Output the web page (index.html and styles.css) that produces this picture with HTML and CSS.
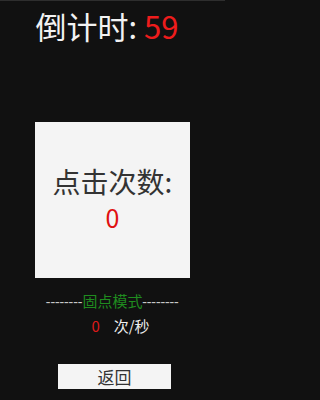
FILE: index.html
```html
<!DOCTYPE html>
<html lang="zh">
<head>
<meta charset="utf-8">
<link rel="stylesheet" href="styles.css">
</head>
<body>
<div class="screen">
  <div class="header"><span class="label">倒计时: </span><span class="count">59</span></div>
  <div class="box">
    <div class="box-label">点击次数:</div>
    <div class="box-count">0</div>
  </div>
  <div class="mode"><span class="dash">--------</span><span class="mode-name">固点模式</span><span class="dash">--------</span></div>
  <div class="rate"><span class="rate-num">0</span><span class="rate-unit">次/秒</span></div>
  <div class="btn-row"><div class="btn">返回</div></div>
</div>
</body>
</html>
```
FILE: styles.css
```css
html, body {
  margin: 0;
  padding: 0;
  background: #111111;
}
.screen {
  width: 225px;
  height: 400px;
  box-sizing: border-box;
  border-top: 1px solid #2e2e2e;
  background: #111111;
  font-family: "Noto Sans CJK SC", "Roboto", sans-serif;
  display: flex;
  flex-direction: column;
  align-items: center;
}
.header {
  margin-top: 3px;
  height: 44px;
  line-height: 44px;
  font-size: 31px;
  color: #f2f2f2;
  white-space: pre;
  margin-right: 11px;
  margin-bottom: 1px;
}
.count {
  color: #ee1c1c;
}
.box {
  margin-top: 73px;
  width: 155px;
  height: 156px;
  background: #f4f4f4;
  display: flex;
  flex-direction: column;
  align-items: center;
  justify-content: center;
  color: #333333;
}
.box-label {
  font-size: 28px;
  line-height: 34px;
}
.box-count {
  font-size: 25px;
  line-height: 39px;
  color: #e01010;
}
.mode {
  margin-top: 13px;
  font-size: 15px;
  line-height: 20px;
  white-space: pre;
}
.dash {
  color: #c8c8c8;
  font-family: "Roboto", sans-serif;
  letter-spacing: 0.4px;
}
.mode-name {
  color: #1f8c1f;
}
.rate {
  margin-top: 4px;
  font-size: 15px;
  line-height: 20px;
  display: flex;
  gap: 14px;
  margin-left: 16px;
}
.rate-num {
  color: #dd1a1a;
}
.rate-unit {
  color: #eeeeee;
}
.btn-row {
  margin-top: 28px;
  display: flex;
  justify-content: center;
  width: 100%;
}
.btn {
  margin-left: 4px;
  width: 113px;
  height: 25px;
  background: #f4f4f4;
  color: #333333;
  font-size: 17px;
  line-height: 25px;
  text-align: center;
}
```
